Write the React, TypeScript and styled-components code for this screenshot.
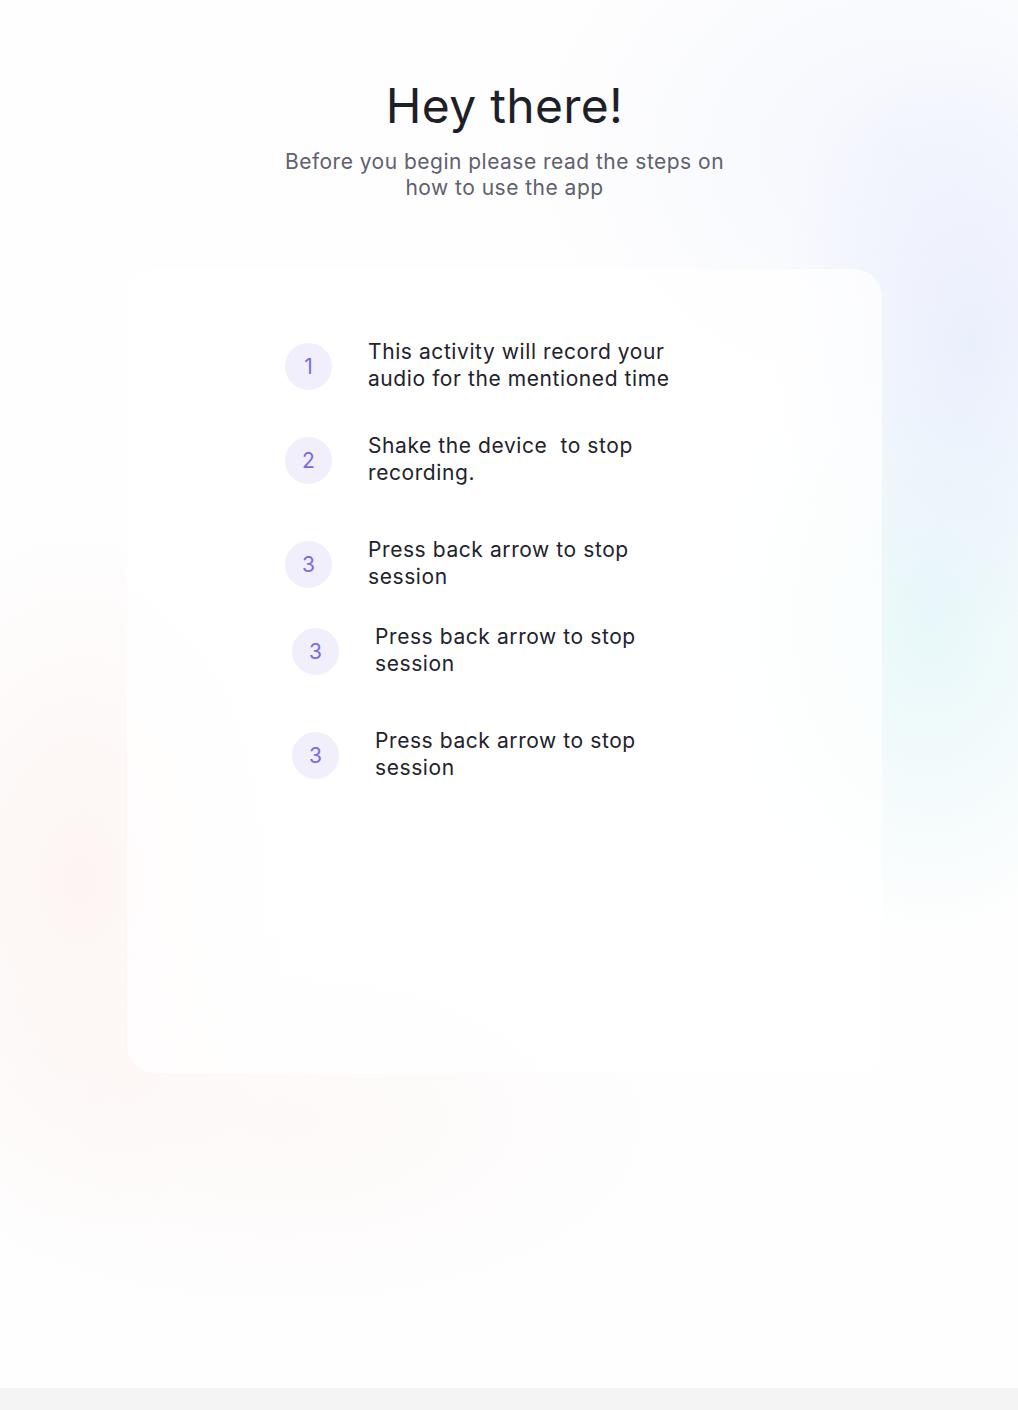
import React from "react";
import styled, { createGlobalStyle } from "styled-components";

const Global = createGlobalStyle`
  html, body { margin: 0; padding: 0; background: #f4f4f4; }
  body { font-family: Inter, "Noto Sans", sans-serif; -webkit-font-smoothing: antialiased; }
`;

const Page = styled.div`
  height: 1388px;
  overflow: hidden;
  background:
    radial-gradient(ellipse 200px 300px at 970px 340px, rgba(228, 234, 252, 0.7), rgba(228, 234, 252, 0) 100%),
    radial-gradient(ellipse 220px 320px at 930px 620px, rgba(226, 246, 248, 0.8), rgba(226, 246, 248, 0) 100%),
    radial-gradient(ellipse 380px 300px at 900px 150px, rgba(238, 241, 253, 0.55), rgba(238, 241, 253, 0) 100%),
    radial-gradient(ellipse 220px 360px at 80px 880px, rgba(252, 240, 236, 0.65), rgba(252, 240, 236, 0) 100%),
    radial-gradient(ellipse 400px 200px at 280px 1120px, rgba(252, 244, 242, 0.5), rgba(252, 244, 242, 0) 100%),
    #fefefe;
`;

const Column = styled.main`
  width: 755px;
  margin-left: 127px;
  display: flex;
  flex-direction: column;
  align-items: center;
  padding-top: 78px;
`;

const Title = styled.h1`
  margin: 0;
  font-size: 48px;
  font-weight: 400;
  line-height: 56px;
  color: #1f1f29;
  letter-spacing: 0.3px;
`;

const Subtitle = styled.p`
  margin: 15px 0 0;
  width: 470px;
  text-align: center;
  font-size: 21px;
  line-height: 26px;
  color: #61606e;
  letter-spacing: 0.48px;
`;

const Card = styled.section`
  margin-top: 68px;
  align-self: stretch;
  height: 804px;
  box-sizing: border-box;
  border-radius: 28px;
  background: rgba(255, 255, 255, 0.72);
  padding: 67px 0 0 158px;
  display: flex;
  flex-direction: column;
`;

const Step = styled.div<{ $top: number; $indent?: number }>`
  display: flex;
  align-items: center;
  height: 60px;
  margin-top: ${(p) => p.$top}px;
  margin-left: ${(p) => p.$indent ?? 0}px;
`;

const Badge = styled.div`
  flex: none;
  width: 47px;
  height: 47px;
  border-radius: 50%;
  background: #f1effc;
  color: #7a6be3;
  font-size: 21px;
  display: flex;
  align-items: center;
  justify-content: center;
`;

const StepText = styled.p`
  margin: 0 0 0 36px;
  padding-bottom: 2px;
  width: 320px;
  font-size: 21px;
  line-height: 27px;
  color: #22222d;
  letter-spacing: 0.58px;
  white-space: pre-wrap;
`;

const steps = [
  { n: 1, text: "This activity will record your audio for the mentioned time", top: 0 },
  { n: 2, text: "Shake the device  to stop recording.", top: 34 },
  { n: 3, text: "Press back arrow to stop session", top: 44 },
  { n: 3, text: "Press back arrow to stop session", top: 27, indent: 7 },
  { n: 3, text: "Press back arrow to stop session", top: 44, indent: 7 },
];

export default function App() {
  return (
    <>
      <Global />
      <Page>
        <Column>
          <Title>Hey there!</Title>
          <Subtitle>Before you begin please read the steps on how to use the app</Subtitle>
          <Card>
            {steps.map((s, i) => (
              <Step key={i} $top={s.top} $indent={s.indent}>
                <Badge>{s.n}</Badge>
                <StepText>{s.text}</StepText>
              </Step>
            ))}
          </Card>
        </Column>
      </Page>
    </>
  );
}
